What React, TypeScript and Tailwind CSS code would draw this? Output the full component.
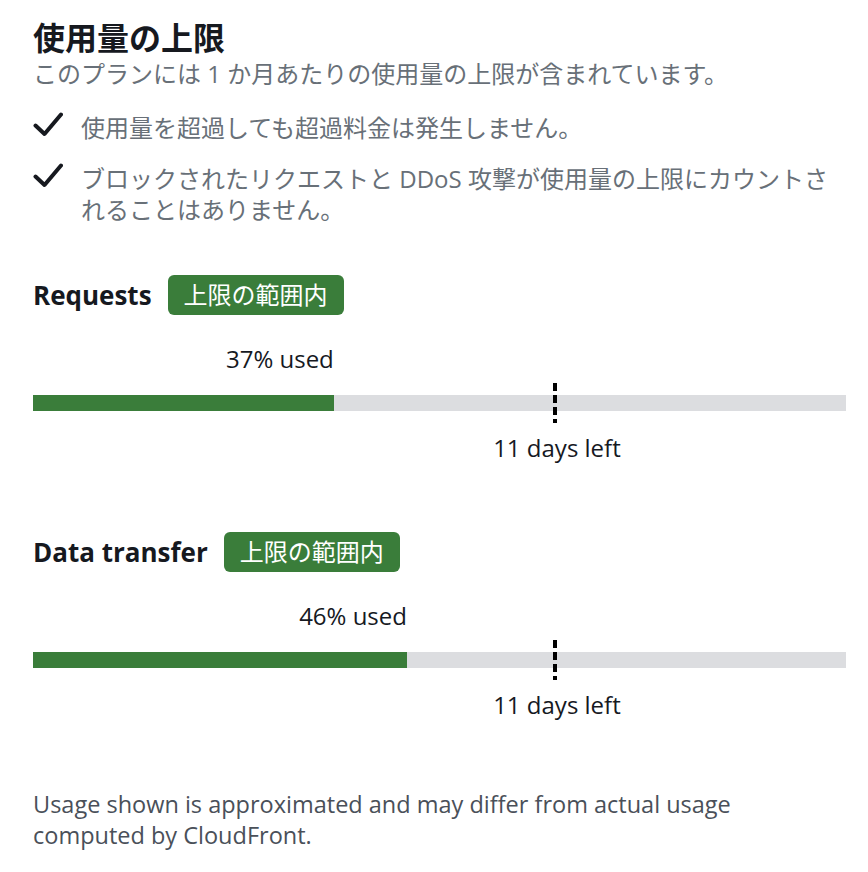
import type { ReactNode } from 'react';

type Meter = {
  title: string;
  used: number;
  elapsed: number;
  daysLeft: number;
};

const METERS: Meter[] = [
  { title: 'Requests', used: 37, elapsed: 64.2, daysLeft: 11 },
  { title: 'Data transfer', used: 46, elapsed: 64.2, daysLeft: 11 },
];

const CheckIcon = () => (
  <svg width="30" height="25" viewBox="0 0 30 25" fill="none" className="shrink-0">
    <path
      d="M2.5 13.5 L11.5 22 L28 2.5"
      stroke="#16191f"
      strokeWidth="4"
      strokeLinecap="round"
      strokeLinejoin="round"
    />
  </svg>
);

const Bullet = ({ children }: { children: ReactNode }) => (
  <li className="flex items-start gap-[18px]">
    <CheckIcon />
    <span className="w-[765px]">{children}</span>
  </li>
);

const MeterBlock = ({ meter }: { meter: Meter }) => (
  <section className="flex flex-col">
    <div className="flex h-10 items-center gap-4">
      <h3 className="text-[26px] font-bold leading-9 text-[#16191f]">{meter.title}</h3>
      <span className="flex h-10 items-center rounded-md bg-[#3a7d3a] px-4 text-[24px] leading-10 text-white">
        上限の範囲内
      </span>
    </div>

    <div className="mt-7 text-right text-[24px] leading-[31px] text-[#16191f]" style={{ width: `${meter.used}%` }}>
      {meter.used}% used
    </div>

    <div className="relative mt-[21px] h-4 bg-[#dcdde0]">
      <div className="h-full bg-[#3a7d3a]" style={{ width: `${meter.used}%` }} />
      {/* 経過日数マーカー */}
      <svg
        width="4"
        height="40"
        className="absolute top-[-12px] -translate-x-1/2"
        style={{ left: `${meter.elapsed}%` }}
      >
        <line x1="2" y1="0" x2="2" y2="40" stroke="#000" strokeWidth="4" strokeDasharray="8 4" />
      </svg>
    </div>

    <div
      className="mt-[21px] w-max -translate-x-1/2 text-[24px] leading-[31px] text-[#16191f]"
      style={{ marginLeft: `calc(${meter.elapsed}% + 2px)` }}
    >
      {meter.daysLeft} days left
    </div>
  </section>
);

function App() {
  return (
    <div
      className="min-h-screen bg-white pb-10 pl-[33px] pr-[22px] pt-5"
      style={{ fontFamily: '"Open Sans", "Noto Sans CJK JP", sans-serif' }}
    >
      <header>
        <h2 className="text-[32px] font-bold leading-9 text-[#16191f]">使用量の上限</h2>
        <p className="mt-[2px] text-[24px] leading-[31px] text-[#687078]">
          このプランには 1 か月あたりの使用量の上限が含まれています。
        </p>
      </header>

      <ul className="mt-[23px] flex flex-col gap-5 text-[24px] leading-[31px] text-[#687078]">
        <Bullet>使用量を超過しても超過料金は発生しません。</Bullet>
        <Bullet>ブロックされたリクエストと DDoS 攻撃が使用量の上限にカウントされることはありません。</Bullet>
      </ul>

      <div className="mt-[50px] flex flex-col gap-[69px]">
        {METERS.map((m) => (
          <MeterBlock key={m.title} meter={m} />
        ))}
        <p className="max-w-[740px] text-[23.5px] leading-[31px] text-[#4a5059]">
          Usage shown is approximated and may differ from actual usage computed by CloudFront.
        </p>
      </div>
    </div>
  );
}

export default App;
